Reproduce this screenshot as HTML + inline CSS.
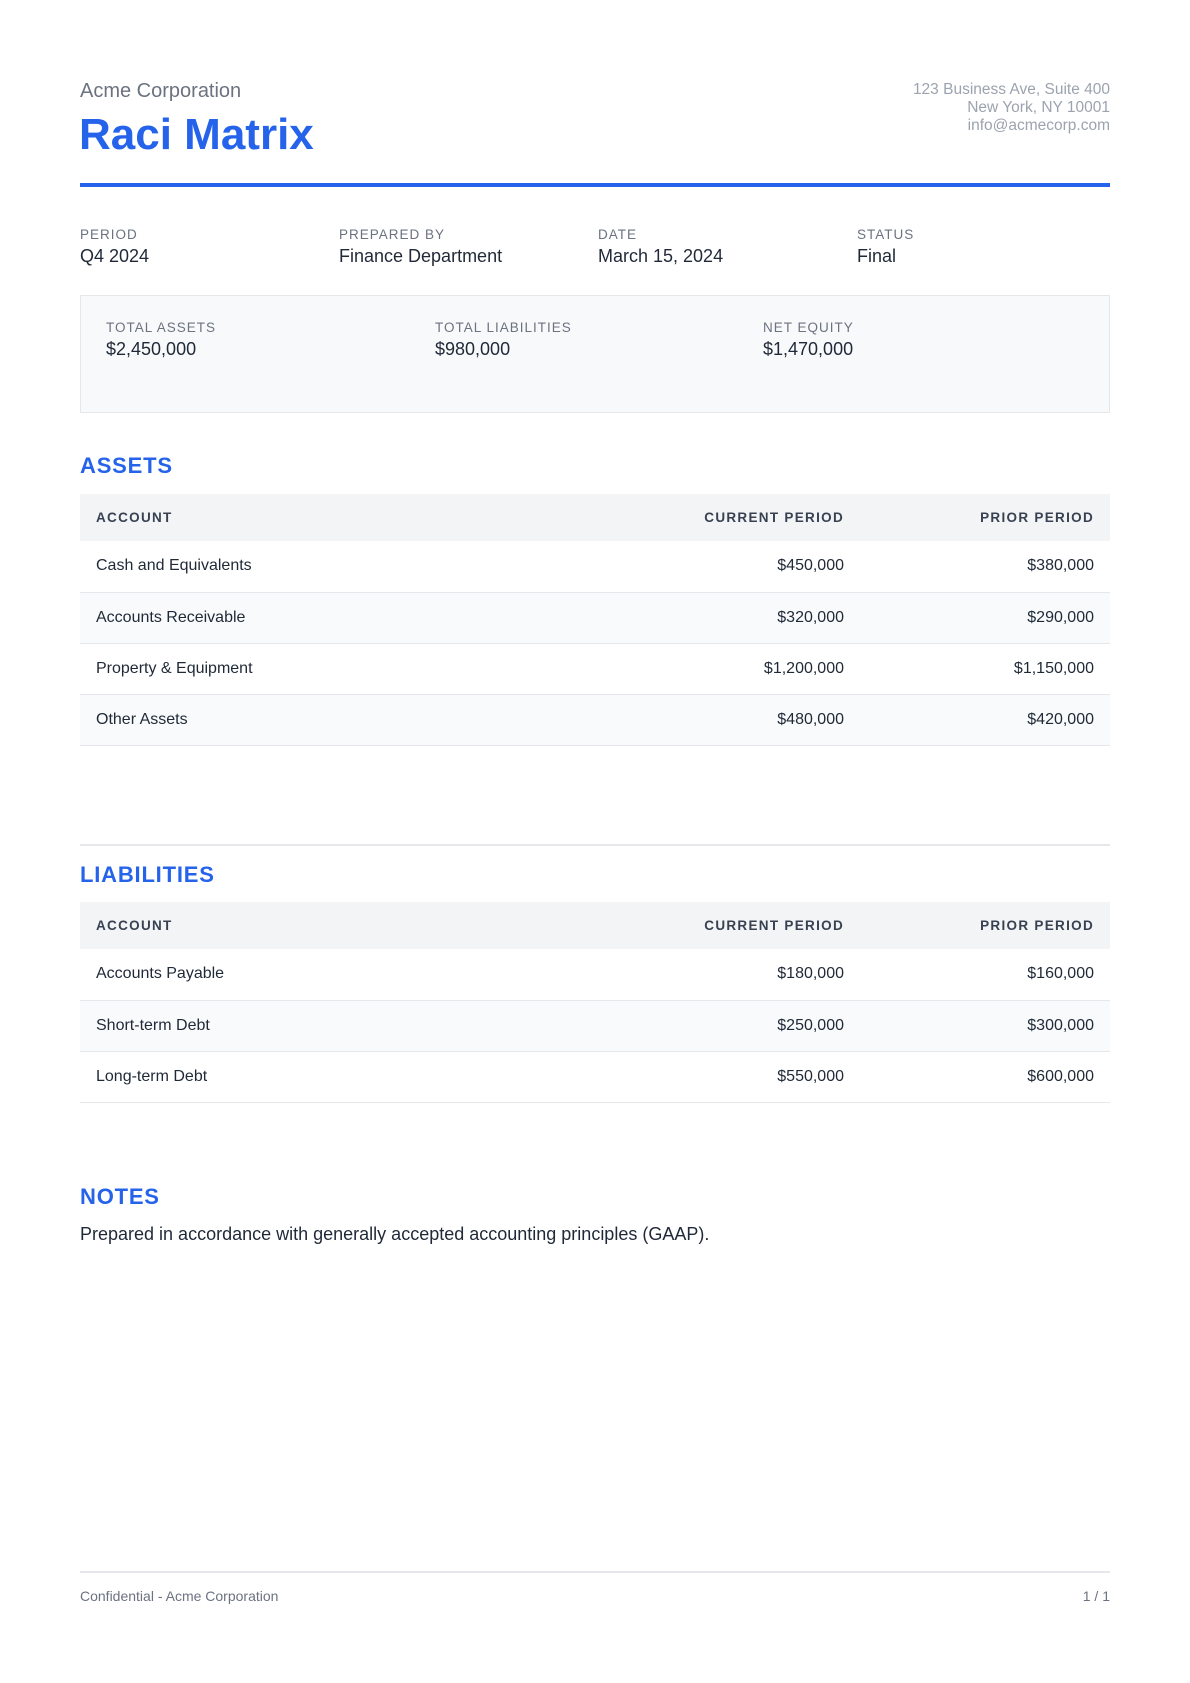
<!DOCTYPE html>
<html><head><meta charset="utf-8"><style>
*{margin:0;padding:0;box-sizing:border-box}
body{width:1190px;height:1683px;background:#fff;font-family:"Liberation Sans",sans-serif;color:#1f2937;position:relative}
.abs{position:absolute}
.lbl{font-size:13.5px;letter-spacing:1px;color:#6b7280;text-transform:uppercase;line-height:15px}
.val{font-size:18px;color:#1f2937;margin-top:4px;line-height:20px}
h2{position:absolute;left:80px;font-size:22px;font-weight:bold;color:#2563eb;letter-spacing:0.8px;line-height:25px}
table{position:absolute;left:80px;width:1030px;border-collapse:collapse;font-size:16px}
th{background:#f3f4f6;height:47px;font-size:13.5px;letter-spacing:1.3px;font-weight:bold;color:#374151;text-align:left;padding:0 16px}
td{height:51.2px;padding:0 16px;border-bottom:1.5px solid #e5e7eb}
tr:nth-child(odd) td{background:#f9fafb}
.r{text-align:right}
</style></head><body>
<div class="abs" style="left:80px;top:80px;font-size:20px;line-height:23px;color:#6b7280">Acme Corporation</div>
<div class="abs" style="left:79px;top:110px;font-size:44px;line-height:49px;font-weight:bold;color:#2563eb">Raci Matrix</div>
<div class="abs" style="right:80px;top:81px;font-size:15.5px;color:#9ca3af;text-align:right;line-height:18px">123 Business Ave, Suite 400<br>New York, NY 10001<br>info@acmecorp.com</div>
<div class="abs" style="left:80px;top:183px;width:1030px;height:4px;background:#2563eb"></div>
<div class="abs" style="left:80px;top:227px"><div class="lbl">Period</div><div class="val">Q4 2024</div></div>
<div class="abs" style="left:339px;top:227px"><div class="lbl">Prepared By</div><div class="val">Finance Department</div></div>
<div class="abs" style="left:598px;top:227px"><div class="lbl">Date</div><div class="val">March 15, 2024</div></div>
<div class="abs" style="left:857px;top:227px"><div class="lbl">Status</div><div class="val">Final</div></div>
<div class="abs" style="left:80px;top:295px;width:1030px;height:118px;background:#f8f9fb;border:1.5px solid #e5e7eb"></div>
<div class="abs" style="left:106px;top:320px"><div class="lbl">Total Assets</div><div class="val">$2,450,000</div></div>
<div class="abs" style="left:435px;top:320px"><div class="lbl">Total Liabilities</div><div class="val">$980,000</div></div>
<div class="abs" style="left:763px;top:320px"><div class="lbl">Net Equity</div><div class="val">$1,470,000</div></div>
<h2 style="top:453px">ASSETS</h2>
<table style="top:494px">
<tr><th>ACCOUNT</th><th class="r">CURRENT PERIOD</th><th class="r" style="width:250px">PRIOR PERIOD</th></tr>
<tr><td>Cash and Equivalents</td><td class="r">$450,000</td><td class="r">$380,000</td></tr>
<tr><td>Accounts Receivable</td><td class="r">$320,000</td><td class="r">$290,000</td></tr>
<tr><td>Property &amp; Equipment</td><td class="r">$1,200,000</td><td class="r">$1,150,000</td></tr>
<tr><td>Other Assets</td><td class="r">$480,000</td><td class="r">$420,000</td></tr>
</table>
<div class="abs" style="left:80px;top:844px;width:1030px;height:1.5px;background:#e5e7eb"></div>
<h2 style="top:862px">LIABILITIES</h2>
<table style="top:902px">
<tr><th>ACCOUNT</th><th class="r">CURRENT PERIOD</th><th class="r" style="width:250px">PRIOR PERIOD</th></tr>
<tr><td>Accounts Payable</td><td class="r">$180,000</td><td class="r">$160,000</td></tr>
<tr><td>Short-term Debt</td><td class="r">$250,000</td><td class="r">$300,000</td></tr>
<tr><td>Long-term Debt</td><td class="r">$550,000</td><td class="r">$600,000</td></tr>
</table>
<h2 style="top:1184px">NOTES</h2>
<div class="abs" style="left:80px;top:1224px;font-size:18px;line-height:20px;color:#1f2937">Prepared in accordance with generally accepted accounting principles (GAAP).</div>
<div class="abs" style="left:80px;top:1571px;width:1030px;height:1.5px;background:#e5e7eb"></div>
<div class="abs" style="left:80px;top:1588px;font-size:14px;line-height:16px;color:#6b7280">Confidential - Acme Corporation</div>
<div class="abs" style="right:80px;top:1588px;font-size:14px;line-height:16px;color:#6b7280">1 / 1</div>
</body></html>
